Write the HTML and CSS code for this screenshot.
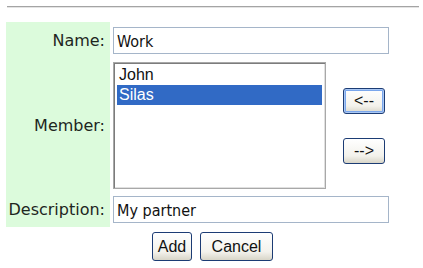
FILE: index.html
```html
<!DOCTYPE html>
<html>
<head>
<meta charset="utf-8">
<link rel="stylesheet" href="styles.css">
</head>
<body>
<hr class="rule">
<form class="form">
  <div class="label">Name:</div>
  <div class="cell cell-name"><input class="text" type="text" value="Work"></div>

  <div class="label">Member:</div>
  <div class="cell cell-member">
    <div class="listbox">
      <div class="option">John</div>
      <div class="option selected">Silas</div>
    </div>
    <div class="movers">
      <button type="button" class="btn btn-move focused">&lt;--</button>
      <button type="button" class="btn btn-move">--&gt;</button>
    </div>
  </div>

  <div class="label">Description:</div>
  <div class="cell cell-desc"><input class="text" type="text" value="My partner"></div>

  <div class="actions">
    <button type="button" class="btn btn-add">Add</button>
    <button type="button" class="btn btn-cancel">Cancel</button>
  </div>
</form>
</body>
</html>
```

FILE: styles.css
```css
html, body {
  margin: 0;
  padding: 0;
  background: #ffffff;
}
body {
  width: 423px;
  height: 268px;
  overflow: hidden;
}
.rule {
  margin: 6px 4px 0 7px;
  height: 0;
  border: 0;
  border-top: 1px solid #a4a4a4;
  border-bottom: 1px solid #e4e4e4;
}
.form {
  margin: 14px 0 0 6px;
  width: 413px;
  display: grid;
  grid-template-columns: 104px 1fr;
  column-gap: 3px;
}
.label {
  background: #dcfbdc;
  font-family: "DejaVu Sans", Verdana, sans-serif;
  font-size: 16px;
  color: #1e261e;
  display: flex;
  align-items: center;
  justify-content: flex-end;
  padding: 0 5px 0 2px;
  white-space: nowrap;
}
.cell {
  display: flex;
  align-items: flex-start;
}
.cell-name { padding: 5px 0 4px; }
.cell-member { padding: 4px 0 3px; align-items: center; }
.cell-desc { padding: 4px 0 4px; }
.text {
  box-sizing: border-box;
  width: 276px;
  height: 27px;
  margin: 0;
  border: 1px solid #a5b5c9;
  padding: 1px 3px 0;
  font-family: "DejaVu Sans Condensed", Tahoma, sans-serif;
  font-size: 16px;
  color: #111;
  background: #fff;
  outline: none;
}
.listbox {
  box-sizing: border-box;
  width: 213px;
  height: 127px;
  border: 1px solid #a8a8a8;
  box-shadow: inset 1px 1px 0 #7c7c7c, inset -1px -1px 0 #e0e0e0;
  padding: 2px 3px;
  background: #fff;
  font-family: "Liberation Sans", Arial, sans-serif;
  font-size: 16px;
  color: #111;
}
.option {
  height: 20px;
  line-height: 20px;
  padding-left: 2px;
}
.option.selected {
  background: #316ac5;
  color: #fff;
}
.movers {
  margin-left: 17px;
  display: flex;
  flex-direction: column;
  gap: 24px;
}
.btn {
  box-sizing: border-box;
  height: 26px;
  margin: 0;
  padding: 0;
  border: 1px solid #1c3c74;
  border-radius: 3px;
  background: linear-gradient(#ffffff, #f3f2ec 70%, #d8d5c8);
  font-family: "Liberation Sans", Arial, sans-serif;
  font-size: 16px;
  color: #111;
}
.btn-move {
  width: 42px;
}
.btn-move.focused {
  box-shadow: inset 0 0 0 1px #aac8f4, inset 0 0 0 2px #7aa6ec;
}
.actions {
  grid-column: 1 / 3;
  display: flex;
  justify-content: center;
  gap: 8px;
  padding-top: 5px;
}
.btn-add { width: 40px; height: 29px; }
.btn-cancel { width: 73px; height: 29px; }
```
